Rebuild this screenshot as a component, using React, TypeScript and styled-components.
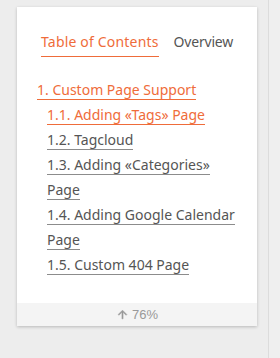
import React from "react";
import styled, { createGlobalStyle } from "styled-components";

const Global = createGlobalStyle`
  html, body { margin: 0; padding: 0; background: #ededed; }
  body { font-family: "Noto Sans", "Liberation Sans", sans-serif; }
  * { box-sizing: border-box; }
`;

const Page = styled.div`
  display: flex;
  width: 280px;
  height: 358px;
  overflow: hidden;
`;

const Main = styled.div`
  width: 268px;
  padding: 7px 11px 0 17px;
  background: #ededed;
`;

const Rail = styled.div`
  flex: 1;
  border-left: 1px solid #dcdcdc;
  background: #efefef;
`;

const Card = styled.div`
  width: 240px;
  background: #fff;
  box-shadow: 0 1px 3px rgba(0, 0, 0, 0.22);
  display: flex;
  flex-direction: column;
`;

const Body = styled.div`
  padding: 25px 20px 26px 20px;
`;

const Tabs = styled.div`
  display: flex;
  gap: 15px;
  padding-left: 4px;
  margin-bottom: 20px;
`;

const Tab = styled.div<{ $active?: boolean }>`
  flex-shrink: 0;
  white-space: nowrap;
  font-size: 14px;
  line-height: 20px;
  letter-spacing: ${(p) => (p.$active ? "0.18px" : "-0.2px")};
  padding-bottom: 4px;
  color: ${(p) => (p.$active ? "#ef6c3a" : "#555")};
  border-bottom: 1px solid ${(p) => (p.$active ? "#ef6c3a" : "transparent")};
`;

const List = styled.div`
  display: flex;
  flex-direction: column;
`;

const Item = styled.div<{ $level: number }>`
  font-size: 14px;
  line-height: 25px;
  padding-left: ${(p) => (p.$level - 1) * 10}px;
`;

const Link = styled.span<{ $active?: boolean }>`
  color: ${(p) => (p.$active ? "#ef6c3a" : "#555")};
  border-bottom: 1px solid ${(p) => (p.$active ? "#ef6c3a" : "#8c8c8c")};
  -webkit-box-decoration-break: clone;
  box-decoration-break: clone;
`;

const Footer = styled.div`
  height: 23px;
  background: #f4f4f4;
  display: flex;
  align-items: center;
  justify-content: center;
  gap: 3px;
  color: #999;
  font-size: 13px;
  font-family: "Liberation Sans", "Noto Sans", sans-serif;
`;

const items = [
  { level: 1, text: "1. Custom Page Support", active: true },
  { level: 2, text: "1.1. Adding «Tags» Page", active: true },
  { level: 2, text: "1.2. Tagcloud" },
  { level: 2, text: "1.3. Adding «Categories» Page" },
  { level: 2, text: "1.4. Adding Google Calendar Page" },
  { level: 2, text: "1.5. Custom 404 Page" },
];

export default function App() {
  return (
    <>
      <Global />
      <Page>
        <Main>
          <Card>
            <Body>
              <Tabs>
                <Tab $active>Table of Contents</Tab>
                <Tab>Overview</Tab>
              </Tabs>
              <List>
                {items.map((it) => (
                  <Item key={it.text} $level={it.level}>
                    <Link $active={it.active}>{it.text}</Link>
                  </Item>
                ))}
              </List>
            </Body>
            <Footer>
              <svg width="13" height="13" viewBox="0 0 24 24" fill="#999">
                <path d="M4 12l1.41 1.41L11 7.83V20h2V7.83l5.58 5.59L20 12l-8-8-8 8z" stroke="#999" strokeWidth="1" />
              </svg>
              <span>76%</span>
            </Footer>
          </Card>
        </Main>
        <Rail />
      </Page>
    </>
  );
}
